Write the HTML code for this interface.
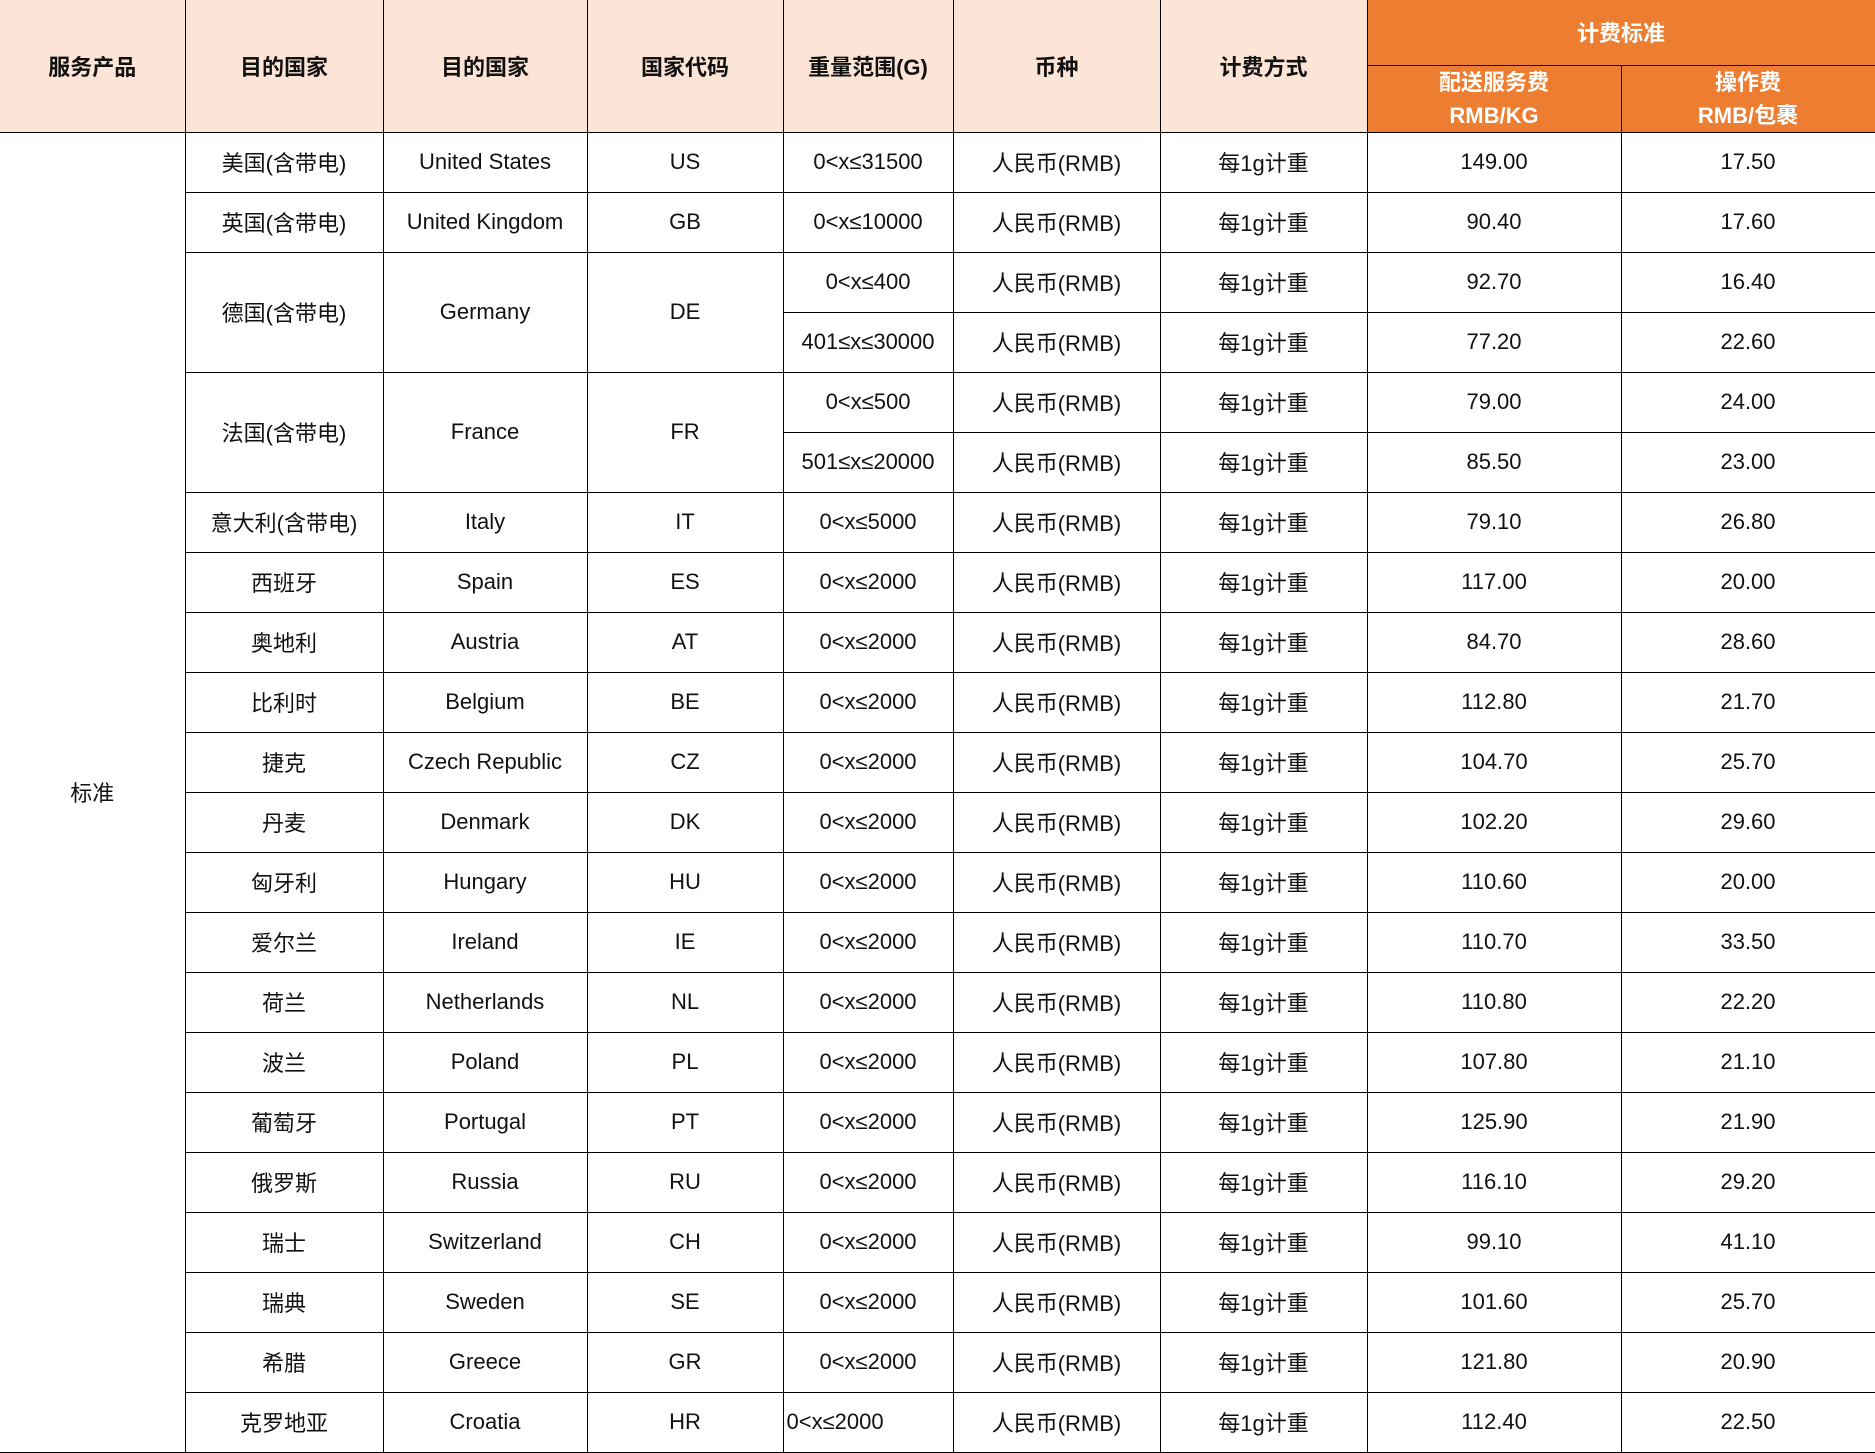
<!DOCTYPE html>
<html><head><meta charset="utf-8"><style>
body{margin:0;width:1875px;height:1453px;background:#fff;overflow:hidden}
table{border-collapse:collapse;table-layout:fixed;position:absolute;left:0;top:0;width:1875px;font-family:"Liberation Sans","Noto Sans CJK SC",sans-serif;font-size:22px;color:#111}
td,th{border:1.5px solid #000;text-align:center;vertical-align:middle;padding:0;white-space:nowrap}
th{background:#fce4d6;font-weight:bold;font-size:22px}
th.o{background:#ed7d31;color:#fff;border-color:#000}
th.o2{line-height:33px}
tr.d td{height:59.03px}
th.f{border-left:none;border-top:none}
td.f{border-left:none;border-bottom:1.5px solid #000}
</style></head><body>
<table>
<colgroup><col style="width:185px"><col style="width:198px"><col style="width:204px"><col style="width:196px"><col style="width:170px"><col style="width:207px"><col style="width:207px"><col style="width:254px"><col style="width:254px"></colgroup>
<tr style="height:65px"><th class="f" rowspan="2">服务产品</th><th rowspan="2" style="border-top:none">目的国家</th><th rowspan="2" style="border-top:none">目的国家</th><th rowspan="2" style="border-top:none">国家代码</th><th rowspan="2" style="border-top:none">重量范围(G)</th><th rowspan="2" style="border-top:none">币种</th><th rowspan="2" style="border-top:none">计费方式</th><th class="o" colspan="2" style="border-top:none">计费标准</th></tr>
<tr style="height:66px"><th class="o o2">配送服务费<br>RMB/KG</th><th class="o o2">操作费<br>RMB/包裹</th></tr>
<tr class="d"><td class="f" rowspan="22">标准</td><td>美国(含带电)</td><td>United States</td><td>US</td><td>0&lt;x≤31500</td><td>人民币(RMB)</td><td>每1g计重</td><td>149.00</td><td>17.50</td></tr>
<tr class="d"><td>英国(含带电)</td><td>United Kingdom</td><td>GB</td><td>0&lt;x≤10000</td><td>人民币(RMB)</td><td>每1g计重</td><td>90.40</td><td>17.60</td></tr>
<tr class="d"><td rowspan="2">德国(含带电)</td><td rowspan="2">Germany</td><td rowspan="2">DE</td><td>0&lt;x≤400</td><td>人民币(RMB)</td><td>每1g计重</td><td>92.70</td><td>16.40</td></tr>
<tr class="d"><td>401≤x≤30000</td><td>人民币(RMB)</td><td>每1g计重</td><td>77.20</td><td>22.60</td></tr>
<tr class="d"><td rowspan="2">法国(含带电)</td><td rowspan="2">France</td><td rowspan="2">FR</td><td>0&lt;x≤500</td><td>人民币(RMB)</td><td>每1g计重</td><td>79.00</td><td>24.00</td></tr>
<tr class="d"><td>501≤x≤20000</td><td>人民币(RMB)</td><td>每1g计重</td><td>85.50</td><td>23.00</td></tr>
<tr class="d"><td>意大利(含带电)</td><td>Italy</td><td>IT</td><td>0&lt;x≤5000</td><td>人民币(RMB)</td><td>每1g计重</td><td>79.10</td><td>26.80</td></tr>
<tr class="d"><td>西班牙</td><td>Spain</td><td>ES</td><td>0&lt;x≤2000</td><td>人民币(RMB)</td><td>每1g计重</td><td>117.00</td><td>20.00</td></tr>
<tr class="d"><td>奥地利</td><td>Austria</td><td>AT</td><td>0&lt;x≤2000</td><td>人民币(RMB)</td><td>每1g计重</td><td>84.70</td><td>28.60</td></tr>
<tr class="d"><td>比利时</td><td>Belgium</td><td>BE</td><td>0&lt;x≤2000</td><td>人民币(RMB)</td><td>每1g计重</td><td>112.80</td><td>21.70</td></tr>
<tr class="d"><td>捷克</td><td>Czech Republic</td><td>CZ</td><td>0&lt;x≤2000</td><td>人民币(RMB)</td><td>每1g计重</td><td>104.70</td><td>25.70</td></tr>
<tr class="d"><td>丹麦</td><td>Denmark</td><td>DK</td><td>0&lt;x≤2000</td><td>人民币(RMB)</td><td>每1g计重</td><td>102.20</td><td>29.60</td></tr>
<tr class="d"><td>匈牙利</td><td>Hungary</td><td>HU</td><td>0&lt;x≤2000</td><td>人民币(RMB)</td><td>每1g计重</td><td>110.60</td><td>20.00</td></tr>
<tr class="d"><td>爱尔兰</td><td>Ireland</td><td>IE</td><td>0&lt;x≤2000</td><td>人民币(RMB)</td><td>每1g计重</td><td>110.70</td><td>33.50</td></tr>
<tr class="d"><td>荷兰</td><td>Netherlands</td><td>NL</td><td>0&lt;x≤2000</td><td>人民币(RMB)</td><td>每1g计重</td><td>110.80</td><td>22.20</td></tr>
<tr class="d"><td>波兰</td><td>Poland</td><td>PL</td><td>0&lt;x≤2000</td><td>人民币(RMB)</td><td>每1g计重</td><td>107.80</td><td>21.10</td></tr>
<tr class="d"><td>葡萄牙</td><td>Portugal</td><td>PT</td><td>0&lt;x≤2000</td><td>人民币(RMB)</td><td>每1g计重</td><td>125.90</td><td>21.90</td></tr>
<tr class="d"><td>俄罗斯</td><td>Russia</td><td>RU</td><td>0&lt;x≤2000</td><td>人民币(RMB)</td><td>每1g计重</td><td>116.10</td><td>29.20</td></tr>
<tr class="d"><td>瑞士</td><td>Switzerland</td><td>CH</td><td>0&lt;x≤2000</td><td>人民币(RMB)</td><td>每1g计重</td><td>99.10</td><td>41.10</td></tr>
<tr class="d"><td>瑞典</td><td>Sweden</td><td>SE</td><td>0&lt;x≤2000</td><td>人民币(RMB)</td><td>每1g计重</td><td>101.60</td><td>25.70</td></tr>
<tr class="d"><td>希腊</td><td>Greece</td><td>GR</td><td>0&lt;x≤2000</td><td>人民币(RMB)</td><td>每1g计重</td><td>121.80</td><td>20.90</td></tr>
<tr class="d"><td>克罗地亚</td><td>Croatia</td><td>HR</td><td style="text-align:left;padding-left:3px">0&lt;x≤2000</td><td>人民币(RMB)</td><td>每1g计重</td><td>112.40</td><td>22.50</td></tr>
</table>
</body></html>
